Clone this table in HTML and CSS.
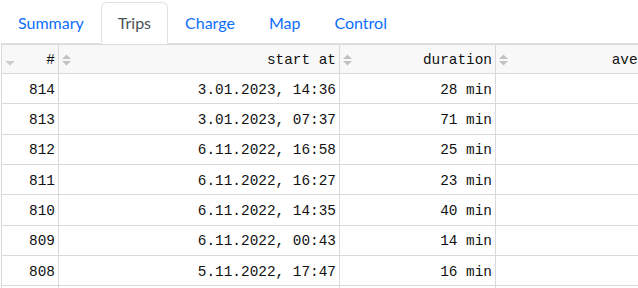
FILE: index.html
```html
<!DOCTYPE html>
<html lang="en">
<head>
<meta charset="utf-8">
<title>Trips</title>
<link rel="stylesheet" href="styles.css">
</head>
<body>
<div class="page">
  <nav class="tabs">
    <a class="tab" href="#">Summary</a>
    <a class="tab active" href="#">Trips</a>
    <a class="tab" href="#">Charge</a>
    <a class="tab" href="#">Map</a>
    <a class="tab" href="#">Control</a>
  </nav>
  <div class="table-wrap">
    <table class="trips">
      <thead>
        <tr>
          <th class="c1"><div class="hc"><svg class="sort desc" width="10" height="5" viewBox="0 0 10 5"><path d="M0 0H10L5 4.5Z"/></svg><span>#</span></div></th>
          <th class="c2"><div class="hc"><svg class="sort" width="9" height="12" viewBox="0 0 9 12"><path d="M0 5L4.5 0.5L9 5Z M0 7H9L4.5 11.5Z"/></svg><span>start at</span></div></th>
          <th class="c3"><div class="hc"><svg class="sort" width="9" height="12" viewBox="0 0 9 12"><path d="M0 5L4.5 0.5L9 5Z M0 7H9L4.5 11.5Z"/></svg><span>duration</span></div></th>
          <th class="c4"><div class="hc"><svg class="sort" width="9" height="12" viewBox="0 0 9 12"><path d="M0 5L4.5 0.5L9 5Z M0 7H9L4.5 11.5Z"/></svg><span>average speed</span></div></th>
        </tr>
      </thead>
      <tbody>
        <tr><td>814</td><td>3.01.2023, 14:36</td><td>28 min</td><td>38 km/h</td></tr>
        <tr><td>813</td><td>3.01.2023, 07:37</td><td>71 min</td><td>52 km/h</td></tr>
        <tr><td>812</td><td>6.11.2022, 16:58</td><td>25 min</td><td>41 km/h</td></tr>
        <tr><td>811</td><td>6.11.2022, 16:27</td><td>23 min</td><td>36 km/h</td></tr>
        <tr><td>810</td><td>6.11.2022, 14:35</td><td>40 min</td><td>47 km/h</td></tr>
        <tr><td>809</td><td>6.11.2022, 00:43</td><td>14 min</td><td>33 km/h</td></tr>
        <tr><td>808</td><td>5.11.2022, 17:47</td><td>16 min</td><td>29 km/h</td></tr>
        <tr><td>807</td><td>5.11.2022, 08:12</td><td>22 min</td><td>44 km/h</td></tr>
      </tbody>
    </table>
  </div>
</div>
</body>
</html>
```
FILE: styles.css
```css
html, body {
  margin: 0;
  padding: 0;
  background: #fff;
  overflow: hidden;
}

.page {
  padding: 2px 0 0 1px;
  width: 800px;
}

.tabs {
  display: flex;
  border-bottom: 1px solid #dee2e6;
  font-family: Lato, "Noto Sans", sans-serif;
  font-size: 16px;
  line-height: 24px;
  width: 637px;
}

.tab {
  display: block;
  padding: 8px 16px;
  border: 1px solid transparent;
  border-radius: 6px 6px 0 0;
  margin-bottom: -1px;
  color: #0d6efd;
  text-decoration: none;
}

.tab.active {
  color: #495057;
  background: #fff;
  border-color: #dee2e6 #dee2e6 #fff;
}

.table-wrap {
  width: 800px;
}

.trips {
  border-collapse: separate;
  border-spacing: 0;
  table-layout: fixed;
  border-left: 1px solid #d9d9d9;
  font-family: "Liberation Mono", "DejaVu Sans Mono", monospace;
  font-size: 14.4px;
  color: #111;
}

.trips th,
.trips td {
  box-sizing: border-box;
  border-right: 1px solid #d9d9d9;
  border-bottom: 1px solid #d9d9d9;
  text-align: right;
  white-space: nowrap;
  padding: 0 3px 0 3px;
}

.trips th {
  background: #f8f8f8;
  font-weight: normal;
  border-top: 1px solid #d9d9d9;
  height: 30px;
  padding-top: 1px;
}

.trips td {
  height: 30.33px;
  line-height: 20px;
  padding-top: 2px;
}

.c1 { width: 57px; }
.c2 { width: 281px; }
.c3 { width: 156px; }
.c4 { width: 232px; }

.hc {
  display: flex;
  align-items: center;
  justify-content: space-between;
  gap: 4px;
}

.sort {
  flex: none;
  fill: #c2c2c2;
}

.sort.desc {
  fill: #cccccc;
  margin-top: 7px;
}
```
